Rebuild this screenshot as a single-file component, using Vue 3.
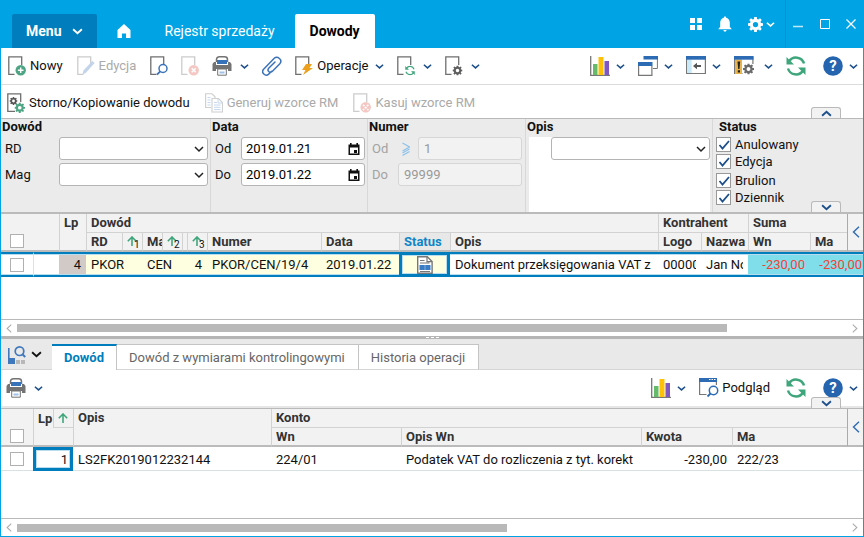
<script setup>
import { ref } from 'vue';

const mainTools = [
  { icon: "new", label: "Nowy" },
  { icon: "edit", label: "Edycja", disabled: true },
  { icon: "find", title: "Szukaj" },
  { icon: "delete", title: "Usuń", disabled: true },
  { icon: "print", title: "Drukuj", wide: true, menu: true },
  { icon: "clip", title: "Załączniki", wide: true },
  { icon: "run", label: "Operacje", menu: true },
  { icon: "sync-doc", title: "Odśwież dokument", menu: true },
  { icon: "gear-doc", title: "Ustawienia dokumentu", menu: true },
];

const viewTools = [
  { icon: "chart", title: "Wykresy", menu: true },
  { icon: "windows", title: "Okna", menu: true },
  { icon: "panel", title: "Panel", menu: true },
  { icon: "warning", title: "Ostrzeżenia", menu: true, spaced: true },
];

const documentTools = [
  { icon: "storno", label: "Storno/Kopiowanie dowodu" },
  { icon: "copy", label: "Generuj wzorce RM", disabled: true },
  { icon: "drop", label: "Kasuj wzorce RM", disabled: true },
];

const statuses = ref([
  { name: "Anulowany", checked: true },
  { name: "Edycja", checked: true },
  { name: "Brulion", checked: true },
  { name: "Dziennik", checked: true },
]);

const dateFrom = ref("2019.01.21");
const dateTo = ref("2019.01.22");

const tabs = ["Dowód", "Dowód z wymiarami kontrolingowymi", "Historia operacji"];
const activeTab = ref(0);

const topScroll = 85.5;
const bottomScroll = 59;
</script>

<template>
  <svg class="sprite" aria-hidden="true">
    <symbol id="page" viewBox="0 0 18 20">
      <path d="M6.5 18.3H.8V.8H13.7V9" fill="none" stroke="#6f6f6f" stroke-width="1.3" />
    </symbol>
    <symbol id="cog" viewBox="0 0 20 20">
      <path d="M8.3 0h3.4l.4 2.7 1.7.7L16 1.8 18.3 4l-1.7 2.3.7 1.7 2.7.4v3.3l-2.7.4-.7 1.7 1.7 2.2-2.3 2.3-2.2-1.7-1.7.7-.4 2.7H8.3l-.4-2.7-1.7-.7L4 18.3 1.7 16l1.7-2.2-.7-1.7L0 11.700V8.400L2.700 8l.7-1.700L1.700 4 4 1.800l2.200 1.600 1.700-.7zM10 6.500a3.500 3.500 0 1 0 0 7 3.500 3.500 0 0 0 0-7z" fill="currentColor" fill-rule="evenodd" />
    </symbol>
    <symbol id="chevron" viewBox="0 0 10 10">
      <path d="M1 3l4 3.600L9 3" fill="none" stroke="currentColor" stroke-width="1.700" />
    </symbol>
    <symbol id="angle" viewBox="0 0 8 12">
      <path d="M7 .8L1.500 6 7 11.200" fill="none" stroke="currentColor" stroke-width="1.400" />
    </symbol>
    <symbol id="arrow-up" viewBox="0 0 10 10">
      <path d="M5 10V1.500M.8 5.200L5 1l4.200 4.200" fill="none" stroke="currentColor" stroke-width="1.600" />
    </symbol>
    <symbol id="new" viewBox="0 0 18 20">
      <use href="#page" width="18" height="20" />
      <circle cx="12.700" cy="14.300" r="5.200" fill="#4da583" />
      <path d="M12.700 11.500v5.600M9.900 14.300h5.600" stroke="#fff" stroke-width="1.400" />
    </symbol>
    <symbol id="edit" viewBox="0 0 18 20">
      <use href="#page" width="18" height="20" />
      <path d="M5.500 18.500l1-4L15.300 5l2.300 2.100-8.700 9.600z" fill="#5285c4" />
    </symbol>
    <symbol id="find" viewBox="0 0 18 20">
      <use href="#page" width="18" height="20" />
      <circle cx="13" cy="12.500" r="4" fill="#fff" stroke="#3c73b8" stroke-width="1.500" />
      <path d="M10.200 15.300L7 18.700" stroke="#3c73b8" stroke-width="1.800" />
    </symbol>
    <symbol id="delete" viewBox="0 0 18 20">
      <use href="#page" width="18" height="20" />
      <circle cx="12.700" cy="14.300" r="5.200" fill="#e26055" />
      <path d="M10.700 12.300l4 4M14.700 12.300l-4 4" stroke="#fff" stroke-width="1.500" />
    </symbol>
    <symbol id="print" viewBox="0 0 20 20">
      <path d="M4.500 6V3.500Q4.500.8 7.500.8h5q3 0 3 2.700V6" fill="#fff" stroke="#737373" stroke-width="1.500" />
      <path d="M2 6h2v3h12V6h2l1.500 2v7H16v-2H4v2H.5V8z" fill="#737373" />
      <path d="M4 9h12v3H4z" fill="#737373" />
      <path d="M5 4h10v4H5z" fill="#3672b9" />
      <path d="M5.700 13h8.600v6.200H5.700z" fill="#fff" stroke="#737373" />
      <path d="M7.500 15.500h5v2h-5z" fill="#9fc1e8" />
    </symbol>
    <symbol id="clip" viewBox="0 0 20 20">
      <path d="M9.500 15.200l-2.800 2.900c-3.300 3-8-1.500-5.100-4.900L12 2.500c3.500-3.200 9 1.300 5.800 5.300l-7.600 7.700c-2.600 2.200-5.500-.9-3.500-3.300L13 6" fill="none" stroke="#3c73b8" stroke-width="1.500" stroke-linecap="round" />
    </symbol>
    <symbol id="run" viewBox="0 0 18 20">
      <use href="#page" width="18" height="20" />
      <path d="M11 8h6l-2.500 4H18l-10 7 2.500-5H7z" fill="#eda01e" />
    </symbol>
    <symbol id="sync" viewBox="0 0 20 20">
      <path d="M18 7.500A8.300 8.300 0 0 0 3 5.500M2 12.500a8.300 8.300 0 0 0 15 2" fill="none" stroke="currentColor" stroke-width="2.500" />
      <path d="M.5 1v7.500H8zM19.500 19v-7.500H12z" fill="currentColor" />
    </symbol>
    <symbol id="sync-doc" viewBox="0 0 18 20">
      <use href="#page" width="18" height="20" />
      <use href="#sync" x="8" y="9.500" width="10" height="10" color="#3fa67c" />
    </symbol>
    <symbol id="gear-doc" viewBox="0 0 18 20">
      <use href="#page" width="18" height="20" />
      <use href="#cog" x="7.500" y="9.500" width="10" height="10" color="#5f5f5f" />
    </symbol>
    <symbol id="chart" viewBox="0 0 20 20">
      <path d="M.7 0v19.300H20" fill="none" stroke="#777" stroke-width="1.300" />
      <path d="M3 8h4.500v11H3z" fill="#66bb6a" />
      <path d="M8.500 1h5v18h-5z" fill="#ffc107" />
      <path d="M14.500 5H19v14h-4.500z" fill="#7e57c2" />
    </symbol>
    <symbol id="windows" viewBox="0 0 20 20">
      <path d="M6 .5h13.400v12H15" fill="#fff" stroke="#777" />
      <path d="M5.500 0H20v3.500H5.500zM0 6h14.500v4H0z" fill="#2d6cb5" />
      <path d="M.6 10v9.300h13.300V10" fill="#fff" stroke="#777" stroke-width="1.200" />
    </symbol>
    <symbol id="panel" viewBox="0 0 20 20">
      <path d="M.6 1h18.800v16.500H.6z" fill="#fff" stroke="#777" stroke-width="1.200" />
      <path d="M1.200 3.500h4.500V17H1.200z" fill="#c9e8f8" />
      <path d="M0 0h20v3.700H0z" fill="#2d6cb5" />
      <path d="M7 10l4-3.300v2.300h4v2h-4v2.300z" fill="#555" />
    </symbol>
    <symbol id="warning" viewBox="0 0 20 20">
      <path d="M.6 1h18.300v16.500H.6z" fill="#fff" stroke="#777" stroke-width="1.200" />
      <path d="M1 3.500h7V18H1z" fill="#eab44d" />
      <path d="M0 0h19.500v3.700H0z" fill="#2d6cb5" />
      <path d="M3.500 5.500h2.700L5.500 13H4.200zM3.800 14.300H6v2.200H3.800z" fill="#222" />
      <path d="M8.500 8H20v11H8.500z" fill="#fff" />
      <use href="#cog" x="9" y="7.500" width="11" height="11" color="#6b6b6b" />
    </symbol>
    <symbol id="help" viewBox="0 0 20 20">
      <circle cx="10" cy="10" r="9.800" fill="#2564ae" />
      <text x="10" y="15.300" text-anchor="middle" font-family="Roboto, sans-serif" font-weight="700" font-size="15" fill="#fff">?</text>
    </symbol>
    <symbol id="storno" viewBox="0 0 18 20">
      <path d="M8 18.300H.8V.8H13.700V9" fill="none" stroke="#6f6f6f" stroke-width="1.300" />
      <use href="#cog" x="2.500" y="4" width="8" height="8" color="#555" />
      <use href="#cog" x="7.500" y="9.500" width="10.500" height="10.500" color="#4da583" />
    </symbol>
    <symbol id="copy" viewBox="0 0 18 20">
      <path d="M6 14.500H.6V.8H7l3 3V5" fill="#fff" stroke="#777" stroke-width="1.100" />
      <path d="M2.500 4.500h3M2.500 7h3M2.500 9.500h3M2.500 12h3" stroke="#5a8fd0" />
      <path d="M7 5.500h6.500l4 4V19H7z" fill="#fff" stroke="#777" stroke-width="1.100" />
      <path d="M13 5.500V10h4.500M9 9.500h3M9 12h6.500M9 14.300h6.500M9 16.600h6.500" fill="none" stroke="#5a8fd0" />
    </symbol>
    <symbol id="drop" viewBox="0 0 18 20">
      <use href="#page" width="18" height="20" />
      <circle cx="12.700" cy="14.300" r="5.200" fill="#e26055" />
      <path d="M10 11.700l5.400 5.400M15.400 11.700L10 17.100" stroke="#fff" stroke-width="1.600" stroke-dasharray="2 1" />
    </symbol>
    <symbol id="preview" viewBox="0 0 20 20">
      <path d="M7.500 16.500H.6V3h16.800v4" fill="#fff" stroke="#777" stroke-width="1.200" />
      <path d="M0 0h18v4H0z" fill="#2d6cb5" />
      <path d="M10 1.500h1.500M12.500 1.500H14M15 1.500h1.500" stroke="#fff" />
      <circle cx="14.500" cy="12.500" r="4.200" fill="#fff" stroke="#2d6cb5" stroke-width="1.500" />
      <path d="M11.500 15.500l-3 3" stroke="#2d6cb5" stroke-width="1.800" />
    </symbol>
    <symbol id="layout" viewBox="0 0 18 18">
      <path d="M0 2h1.600v10H7v6H0z" fill="#3f78bd" />
      <path d="M8 14h4v4H8zM13 14h4v4h-4z" fill="#b8b8b8" />
      <circle cx="11.500" cy="5.200" r="4.300" fill="none" stroke="#3f78bd" stroke-width="1.700" />
      <path d="M14.200 8l3 3" stroke="#3f78bd" stroke-width="2" />
    </symbol>
    <symbol id="status-doc" viewBox="0 0 16 18">
      <path d="M.7.700h9.600l4.800 4.800v11.800H.700z" fill="#fff" stroke="#777" stroke-width="1.400" />
      <path d="M10 .7v5h5M3 4.500h4.500M3 7h9.500M3 15.500h10" fill="none" stroke="#777" stroke-width="1.200" />
      <path d="M2.500 9h11v5h-11z" fill="#3a7cc4" />
      <path d="M8 9v5" stroke="#7fadde" />
    </symbol>
    <symbol id="calendar" viewBox="0 0 12 12">
      <path d="M.5 1.500H2V0h1.600v1.500h4.800V0H10v1.500h1.500V12H.5zM2 4.500v6h8v-6z" fill="#111" fill-rule="evenodd" />
      <path d="M6 7h3v3H6z" fill="#111" />
    </symbol>
    <symbol id="house" viewBox="0 0 14 14">
      <path d="M7 0l6.500 6v8H9V9.500H5V14H.5V6z" fill="#fff" />
    </symbol>
    <symbol id="tiles" viewBox="0 0 12 12">
      <path d="M0 0h5v5H0zM7 0h5v5H7zM0 7h5v5H0zM7 7h5v5H7z" fill="#fff" />
    </symbol>
    <symbol id="bell" viewBox="0 0 14 16">
      <path d="M7 .5c.8 0 1.200.5 1.200 1.200 2.600.7 3.600 2.800 3.600 5.300v3.800l2 2.400H.200l2-2.400V7c0-2.500 1-4.600 3.600-5.300C5.800 1 6.200.500 7 .500zM5.300 14h3.400q-.4 1.700-1.700 1.700T5.300 14z" fill="#fff" />
    </symbol>
  </svg>

  <div class="window">
    <header class="titlebar">
      <nav class="titlebar-nav">
        <button class="menu-button">
          Menu
          <svg class="chevron-large"><use href="#chevron" /></svg>
        </button>
        <button class="home-button" aria-label="Start">
          <svg class="icon-home"><use href="#house" /></svg>
        </button>
        <button class="page-tab">Rejestr sprzedaży</button>
        <button class="page-tab page-tab-active">Dowody</button>
      </nav>
      <div class="titlebar-tools">
        <button aria-label="Aplikacje"><svg class="icon-tiles"><use href="#tiles" /></svg></button>
        <button aria-label="Powiadomienia"><svg class="icon-bell"><use href="#bell" /></svg></button>
        <button class="settings-button" aria-label="Ustawienia">
          <svg class="icon-settings"><use href="#cog" /></svg>
          <svg class="chevron-small"><use href="#chevron" /></svg>
        </button>
      </div>
      <div class="window-buttons">
        <button aria-label="Minimalizuj">
          <svg viewBox="0 0 10 10"><path d="M0 7.500h10" stroke="#bfe8f8" stroke-width="1.500" /></svg>
        </button>
        <button aria-label="Maksymalizuj">
          <svg viewBox="0 0 10 10"><path d="M.5.500h9v9h-9z" fill="none" stroke="#fff" /></svg>
        </button>
        <button aria-label="Zamknij">
          <svg viewBox="0 0 10 10"><path d="M.5.500l9 9M9.500.500l-9 9" stroke="#fff" stroke-width="1.200" /></svg>
        </button>
      </div>
    </header>

    <div class="toolbar">
      <button
        v-for="tool in mainTools"
        :key="tool.icon"
        class="tool"
        :disabled="tool.disabled"
        :aria-label="tool.title"
      >
        <svg :class="tool.wide ? 'icon-wide' : 'icon'"><use :href="'#' + tool.icon" /></svg>
        <span v-if="tool.label">{{ tool.label }}</span>
        <svg v-if="tool.menu" class="chevron"><use href="#chevron" /></svg>
      </button>
      <div class="toolbar-right">
        <button
          v-for="tool in viewTools"
          :key="tool.icon"
          class="tool"
          :class="{ 'tool-spaced': tool.spaced }"
          :aria-label="tool.title"
        >
          <svg class="icon-wide"><use :href="'#' + tool.icon" /></svg>
          <svg class="chevron"><use href="#chevron" /></svg>
        </button>
        <button class="tool tool-sync" aria-label="Odśwież">
          <svg class="icon-wide"><use href="#sync" /></svg>
        </button>
        <button class="tool" aria-label="Pomoc">
          <svg class="icon-wide"><use href="#help" /></svg>
          <svg class="chevron"><use href="#chevron" /></svg>
        </button>
      </div>
    </div>

    <div class="toolbar toolbar-secondary">
      <button
        v-for="tool in documentTools"
        :key="tool.icon"
        class="tool"
        :disabled="tool.disabled"
      >
        <svg class="icon"><use :href="'#' + tool.icon" /></svg>
        <span>{{ tool.label }}</span>
      </button>
      <button class="fold" aria-label="Zwiń pasek">
        <svg class="chevron chevron-up"><use href="#chevron" /></svg>
      </button>
    </div>

    <form class="filters" @submit.prevent>
      <section class="filter">
        <h2>Dowód</h2>
        <div class="field">
          <label for="rd" class="label-wide">RD</label>
          <select id="rd"></select>
        </div>
        <div class="field">
          <label for="mag" class="label-wide">Mag</label>
          <select id="mag"></select>
        </div>
      </section>
      <section class="filter">
        <h2>Data</h2>
        <div class="field">
          <label for="date-from">Od</label>
          <div class="date-box">
            <input id="date-from" v-model="dateFrom" type="text" />
            <button type="button" aria-label="Wybierz datę od"><svg><use href="#calendar" /></svg></button>
          </div>
        </div>
        <div class="field">
          <label for="date-to">Do</label>
          <div class="date-box">
            <input id="date-to" v-model="dateTo" type="text" />
            <button type="button" aria-label="Wybierz datę do"><svg><use href="#calendar" /></svg></button>
          </div>
        </div>
      </section>
      <section class="filter filter-number">
        <h2>Numer</h2>
        <div class="field">
          <label for="no-from">Od</label>
          <svg class="icon-range" viewBox="0 0 8 14">
            <path d="M.5 1l7 4-7 4M.5 11l7-4M.5 13.500l7-4" fill="none" stroke="#8fc3ea" stroke-width="1.200" />
          </svg>
          <input id="no-from" type="text" value="1" disabled />
        </div>
        <div class="field">
          <label for="no-to">Do</label>
          <input id="no-to" type="text" value="99999" disabled />
        </div>
      </section>
      <section class="filter filter-note">
        <h2><label for="note">Opis</label></h2>
        <div class="note-area">
          <select id="note"></select>
        </div>
      </section>
      <section class="filter filter-status">
        <h2>Status</h2>
        <div class="status-list">
          <label v-for="status in statuses" :key="status.name">
            <input v-model="status.checked" type="checkbox" />
            {{ status.name }}
          </label>
        </div>
      </section>
      <button type="button" class="fold" aria-label="Rozwiń filtry">
        <svg class="chevron"><use href="#chevron" /></svg>
      </button>
    </form>

    <div class="grid-area grid-area-top">
      <table class="grid">
        <colgroup>
          <col class="w-check" /><col class="w-blank" /><col class="w-lp" />
          <col class="w-rd" /><col class="w-sort" /><col class="w-sort" /><col class="w-sort" />
          <col class="w-thin" /><col class="w-sort" /><col class="w-number" /><col class="w-date" />
          <col class="w-status" /><col /><col class="w-logo" /><col class="w-name" />
          <col class="w-sum" /><col class="w-sum-last" /><col class="w-side" />
        </colgroup>
        <thead>
          <tr>
            <th colspan="2" rowspan="2" class="check-head"><input type="checkbox" aria-label="Zaznacz wszystkie" /></th>
            <th rowspan="2" class="tall">Lp</th>
            <th colspan="10" class="group">Dowód</th>
            <th colspan="2" class="group">Kontrahent</th>
            <th colspan="2" class="group">Suma</th>
            <th rowspan="2" class="side">
              <button aria-label="Panel boczny"><svg><use href="#angle" /></svg></button>
            </th>
          </tr>
          <tr>
            <th>RD</th>
            <th class="sort"><span><svg><use href="#arrow-up" /></svg><i>1</i></span></th>
            <th>Ma</th>
            <th class="sort"><span><svg><use href="#arrow-up" /></svg><i>2</i></span></th>
            <th class="sort"></th>
            <th class="sort"><span><svg><use href="#arrow-up" /></svg><i>3</i></span></th>
            <th>Numer</th>
            <th>Data</th>
            <th class="current">Status</th>
            <th>Opis</th>
            <th>Logo</th>
            <th>Nazwa</th>
            <th>Wn</th>
            <th>Ma</th>
          </tr>
        </thead>
        <tbody>
          <tr class="selected">
            <td class="check"><input type="checkbox" aria-label="Zaznacz wiersz 4" /></td>
            <td class="blank"></td>
            <td class="lp">4</td>
            <td colspan="2" class="key">PKOR</td>
            <td colspan="2" class="key">CEN</td>
            <td colspan="2" class="key right">4</td>
            <td class="key">PKOR/CEN/19/4</td>
            <td class="key">2019.01.22</td>
            <td class="key focused"><svg class="icon-status" role="img" aria-label="Dokument"><use href="#status-doc" /></svg></td>
            <td><div class="clip">Dokument przeksięgowania VAT z</div></td>
            <td><div class="clip">00000</div></td>
            <td><div class="clip">Jan No</div></td>
            <td class="amount right">-230,00</td>
            <td colspan="2" class="amount amount-last right">-230,00</td>
          </tr>
        </tbody>
      </table>
    </div>
    <div class="scrollbar">
      <svg><use href="#angle" /></svg>
      <div class="track"><div class="thumb" :style="{ width: topScroll + '%' }"></div></div>
      <svg class="scroll-right"><use href="#angle" /></svg>
    </div>
    <div class="splitter"></div>

    <div class="tabs">
      <button class="layout-button" aria-label="Układ">
        <svg class="icon"><use href="#layout" /></svg>
        <svg class="chevron-large"><use href="#chevron" /></svg>
      </button>
      <button
        v-for="(tab, index) in tabs"
        :key="tab"
        class="tab"
        :class="{ 'tab-active': index === activeTab }"
        @click="activeTab = index"
      >
        {{ tab }}
      </button>
    </div>

    <div class="toolbar toolbar-bottom">
      <button class="tool" aria-label="Drukuj">
        <svg class="icon-wide"><use href="#print" /></svg>
        <svg class="chevron"><use href="#chevron" /></svg>
      </button>
      <div class="toolbar-right">
        <button class="tool" aria-label="Wykresy">
          <svg class="icon-wide"><use href="#chart" /></svg>
          <svg class="chevron"><use href="#chevron" /></svg>
        </button>
        <button class="tool tool-preview">
          <svg class="icon-wide"><use href="#preview" /></svg>
          <span>Podgląd</span>
        </button>
        <button class="tool tool-sync" aria-label="Odśwież">
          <svg class="icon-wide"><use href="#sync" /></svg>
        </button>
        <button class="tool" aria-label="Pomoc">
          <svg class="icon-wide"><use href="#help" /></svg>
          <svg class="chevron"><use href="#chevron" /></svg>
        </button>
      </div>
      <button class="fold" aria-label="Rozwiń filtry pozycji">
        <svg class="chevron"><use href="#chevron" /></svg>
      </button>
    </div>

    <div class="grid-area grid-area-bottom">
      <table class="grid">
        <colgroup>
          <col class="w-check" /><col class="w-sort" /><col class="w-sort" />
          <col class="w-text" /><col class="w-account" /><col /><col class="w-value" />
          <col class="w-credit" /><col class="w-side" />
        </colgroup>
        <thead>
          <tr>
            <th rowspan="2" class="check-head"><input type="checkbox" aria-label="Zaznacz wszystkie pozycje" /></th>
            <th class="open">Lp</th>
            <th class="sort group"><svg><use href="#arrow-up" /></svg></th>
            <th rowspan="2" class="tall">Opis</th>
            <th colspan="4" class="group">Konto</th>
            <th rowspan="2" class="side">
              <button aria-label="Panel boczny pozycji"><svg><use href="#angle" /></svg></button>
            </th>
          </tr>
          <tr>
            <th colspan="2"></th>
            <th>Wn</th>
            <th>Opis Wn</th>
            <th>Kwota</th>
            <th>Ma</th>
          </tr>
        </thead>
        <tbody>
          <tr class="plain">
            <td class="check"><input type="checkbox" aria-label="Zaznacz pozycję 1" /></td>
            <td colspan="2" class="focused right">1</td>
            <td>LS2FK2019012232144</td>
            <td>224/01</td>
            <td><div class="clip">Podatek VAT do rozliczenia z tyt. korekt</div></td>
            <td class="right">-230,00</td>
            <td colspan="2">222/23</td>
          </tr>
        </tbody>
      </table>
    </div>
    <div class="scrollbar scrollbar-last">
      <svg><use href="#angle" /></svg>
      <div class="track"><div class="thumb" :style="{ width: bottomScroll + '%' }"></div></div>
      <svg class="scroll-right"><use href="#angle" /></svg>
    </div>
  </div>
</template>

<style>
body {
  margin: 0;
}
</style>

<style scoped>
.sprite {
  position: absolute;
  width: 0;
  height: 0;
}

.window {
  display: flex;
  flex-direction: column;
  box-sizing: border-box;
  min-height: 100vh;
  border: 1px solid #00a4e4;
  border-top: 0;
  background: #fff;
  color: #111;
  font: 13px/16px Roboto, sans-serif;
}

.window *,
.window *::before {
  box-sizing: border-box;
}

button {
  display: flex;
  align-items: center;
  padding: 0;
  border: 0;
  background: none;
  color: inherit;
  font: inherit;
}

svg {
  display: block;
  flex: none;
}

/* title bar */
.titlebar {
  display: flex;
  height: 48px;
  background: #00a4e4;
  color: #fff;
}

.titlebar-nav {
  display: flex;
  flex: 1;
  align-items: stretch;
  padding: 14px 0 0 11px;
  font-size: 14px;
}

.menu-button {
  gap: 10px;
  padding: 0 14px;
  border-radius: 2px 2px 0 0;
  background: #007dbc;
  font-weight: 700;
}

.home-button {
  padding: 0 19px 0 20px;
}

.page-tab {
  padding: 0 20px 0 15px;
}

.page-tab-active {
  padding: 0 15px;
  border-radius: 2px 2px 0 0;
  background: #fff;
  color: #000;
  font-weight: 700;
}

.titlebar-tools {
  display: flex;
  align-items: center;
  gap: 16px;
  padding-right: 10px;
}

.settings-button {
  gap: 3px;
}

.window-buttons {
  display: flex;
  align-items: center;
  justify-content: space-between;
  width: 78px;
  padding: 0 7px;
  border-left: 1px solid #0093d0;
}

.window-buttons svg {
  width: 10px;
  height: 10px;
}

.icon-home {
  width: 14px;
  height: 14px;
}

.icon-tiles {
  width: 12px;
  height: 12px;
}

.icon-bell {
  width: 14px;
  height: 16px;
}

.icon-settings {
  width: 15px;
  height: 15px;
}

.chevron-large {
  width: 11px;
  height: 11px;
}

.chevron-small {
  width: 9px;
  height: 9px;
}

/* toolbars */
.toolbar {
  position: relative;
  display: flex;
  align-items: center;
  gap: 13px;
  height: 37px;
  padding: 0 5px 0 7px;
  border-bottom: 1px solid #dcdcdc;
}

.toolbar-secondary {
  gap: 14px;
  height: 34px;
  padding: 2px 6px 0;
  border-bottom-color: #b9b9b9;
}

.toolbar-bottom {
  height: 39px;
  padding: 0 5px 2px;
  border-bottom-color: #b9b9b9;
  box-shadow: inset 0 -2px #e6e6e6;
}

.toolbar-right {
  display: flex;
  gap: 13px;
  margin-left: auto;
}

.tool {
  gap: 4px;
  color: #111;
}

.tool span {
  margin-right: 1px;
}

.tool:disabled {
  color: #aaa;
}

.tool:disabled svg {
  opacity: 0.35;
}

.tool .chevron {
  margin-left: 4px;
}

.tool span + .chevron {
  margin-left: 2px;
}

.toolbar-right .chevron {
  margin-left: 2px;
}

.toolbar-right .tool-spaced .chevron {
  margin-left: 6px;
}

.tool-preview {
  gap: 3px;
  margin-right: 2px;
}

.tool-sync {
  margin-right: 4px;
  color: #3fa67c;
}

.icon {
  width: 18px;
  height: 20px;
}

.icon-wide {
  width: 20px;
  height: 20px;
}

.chevron {
  width: 9px;
  height: 9px;
  color: #1c4f8c;
}

.fold {
  position: absolute;
  right: 22px;
  bottom: 0;
  justify-content: center;
  width: 30px;
  height: 11px;
  border: 1px solid #b9b9b9;
  border-bottom: 0;
  border-radius: 3px 3px 0 0;
  background: #f2f2f2;
}

.fold .chevron {
  width: 11px;
  height: 11px;
}

.chevron-up {
  transform: rotate(180deg);
}

/* filters */
.filters {
  position: relative;
  display: grid;
  grid-template-columns: 210fr 157fr 158fr 187fr 150fr;
  height: 95px;
  border-bottom: 2px solid #bbb;
  background: #ebebeb;
}

.filter {
  display: flex;
  flex-direction: column;
  gap: 3px;
  min-width: 0;
  padding-right: 2px;
  border-right: 1px solid #d8d8d8;
}

.filter h2 {
  margin: 0;
  padding-left: 1px;
  font-size: 13px;
  font-weight: 700;
  line-height: 15px;
}

.field {
  display: flex;
  align-items: center;
  padding-left: 4px;
}

.field label {
  flex: none;
  width: 26px;
}

.field .label-wide {
  width: 54px;
}

select,
.date-box,
.field > input {
  flex: 1;
  min-width: 0;
  height: 23px;
  border: 1px solid #b4b4b4;
  border-radius: 3px;
  background: #fff;
  color: #111;
  font: inherit;
}

select {
  appearance: none;
  background: #fff url("data:image/svg+xml,%3Csvg xmlns='http://www.w3.org/2000/svg' viewBox='0 0 10 10'%3E%3Cpath d='M1 3l4 4 4-4' fill='none' stroke='%23222' stroke-width='1.500'/%3E%3C/svg%3E") no-repeat right 3px center / 10px 10px;
}

.date-box {
  display: flex;
  align-items: center;
  padding: 0 4px;
}

.date-box input {
  flex: 1;
  min-width: 0;
  padding: 0;
  border: 0;
  font: inherit;
}

.date-box svg {
  width: 12px;
  height: 12px;
}

.filter-number {
  padding-right: 3px;
  color: #a3a3a3;
}

.filter-number h2 {
  color: #111;
}

.filter-number .field > input {
  padding: 0 5px;
  border-color: #d6d6d6;
  background: #f2f2f2;
  color: #999;
}

.icon-range {
  width: 8px;
  height: 14px;
  margin: 0 8px 0 4px;
}

.note-area {
  display: flex;
  flex: 1;
  align-items: flex-start;
  margin-left: 3px;
  padding-left: 22px;
  background: #fff;
}

.filter-status {
  padding-left: 3px;
  border-right: 0;
}

.filter-status h2 {
  padding-left: 3px;
}

.status-list {
  display: flex;
  flex-direction: column;
  gap: 2px;
}

.status-list label {
  display: flex;
  align-items: center;
  gap: 4px;
  height: 15px;
}

.status-list label:nth-child(3) {
  margin-top: 2px;
}

input[type="checkbox"] {
  display: block;
  flex: none;
  appearance: none;
  width: 14px;
  height: 14px;
  margin: 0;
  border: 1px solid #b0b0b0;
  background: #fff;
}

.status-list input[type="checkbox"] {
  width: 15px;
  height: 15px;
  border-color: #999;
}

input[type="checkbox"]:checked {
  background: #fff url("data:image/svg+xml,%3Csvg xmlns='http://www.w3.org/2000/svg' viewBox='0 0 12 12'%3E%3Cpath d='M1.500 6l3 3.500L11 2' fill='none' stroke='%231c4f8c' stroke-width='1.800'/%3E%3C/svg%3E") no-repeat center / 12px 12px;
}

/* grids */
.grid-area {
  overflow: hidden;
  border-bottom: 1px solid #b9b9b9;
}

.grid-area-top {
  flex: 105 1 0;
}

.grid-area-bottom {
  flex: 109 1 0;
}

.grid {
  width: 100%;
  table-layout: fixed;
  border-spacing: 0;
}

.w-check {
  width: 32px;
}

.w-blank {
  width: 26px;
}

.w-lp {
  width: 27px;
}

.w-rd {
  width: 36px;
}

.w-sort {
  width: 20px;
}

.w-thin {
  width: 5px;
}

.w-number {
  width: 114px;
}

.w-date {
  width: 78px;
}

.w-status {
  width: 51px;
}

.w-logo {
  width: 43px;
}

.w-name {
  width: 47px;
}

.w-sum {
  width: 62px;
}

.w-sum-last {
  width: 37px;
}

.w-side {
  width: 16px;
}

.w-text {
  width: 198px;
}

.w-account {
  width: 130px;
}

.w-value {
  width: 91px;
}

.w-credit {
  width: 115px;
}

th {
  height: 19px;
  padding: 0 0 0 4px;
  overflow: hidden;
  border-left: 1px solid #d2d2d2;
  border-bottom: 2px solid #bbb;
  background: #f2f2f2;
  color: #333;
  font-weight: 700;
  line-height: 16px;
  text-align: left;
  white-space: nowrap;
}

th.group {
  border-bottom: 1px solid #d2d2d2;
}

th.open {
  border-bottom: 0;
}

th.tall {
  vertical-align: top;
  padding-top: 1px;
}

th.check-head {
  padding: 0 0 2px 9px;
  border-left: 0;
  vertical-align: bottom;
}

th.sort {
  color: #3fa67c;
}

th.sort span {
  display: flex;
  align-items: flex-start;
}

th.sort svg {
  width: 10px;
  height: 10px;
}

th.sort span svg {
  margin-top: 2px;
}

th.sort i {
  margin: 6px 0 0 -3px;
  color: #111;
  font-size: 10px;
  font-style: normal;
  font-weight: 400;
  line-height: 10px;
}

th.current {
  background: #e8e8e8;
  color: #0d86c8;
}

th.side {
  padding: 0;
  border-left-color: #aaa;
}

th.side button {
  justify-content: center;
  width: 100%;
  color: #2d6cb5;
}

th.side svg {
  width: 8px;
  height: 12px;
}

td {
  height: 24px;
  padding: 0 5px;
  white-space: nowrap;
}

.plain td {
  padding-top: 2px;
  border-bottom: 1px solid #d9e2e2;
}

.selected td {
  height: 25px;
  border-top: 2px solid #007dbc;
  border-bottom: 2px solid #007dbc;
  box-shadow: inset 0 1px #b9dcee, inset 0 -1px #b9dcee;
}

td.check,
.plain td.check {
  padding: 0 0 0 9px;
}

.selected td.blank {
  border-left: 1px solid #cfe6f5;
}

.selected td.lp {
  background: #d2cac6;
  text-align: right;
}

.selected td.key {
  background: #feffe1;
}

.selected td.amount {
  background: #80deea;
  color: #f44336;
}

.selected td.amount-last {
  padding: 0 1px 0 0;
}

.right {
  text-align: right;
}

.clip {
  overflow: hidden;
}

td.focused,
.selected td.focused,
.plain td.focused {
  border: 3px solid #007dbc;
  box-shadow: inset 0 0 0 1px #b9dcee;
}

td.focused.right {
  padding-right: 2px;
}

.icon-status {
  width: 16px;
  height: 18px;
  margin: 0 auto;
}

/* scrollbars */
.scrollbar {
  display: flex;
  align-items: center;
  gap: 5px;
  height: 16px;
  padding: 0 5px;
  color: #aaa;
}

.scrollbar-last {
  height: 17px;
}

.scrollbar svg {
  width: 6px;
  height: 9px;
}

.scroll-right {
  transform: rotate(180deg);
}

.track {
  flex: 1;
}

.thumb {
  height: 8px;
  background: #b9b9b9;
}

.splitter {
  height: 3px;
  background: linear-gradient(90deg, #fff 3px, transparent 3px 5px, #fff 5px 8px, transparent 8px 10px, #fff 10px) center / 13px 1px no-repeat #b5b5b5;
}

/* detail tabs */
.tabs {
  display: flex;
  align-items: stretch;
  height: 31px;
  padding-top: 5px;
  background: #e9e9e9;
  box-shadow: inset 0 -1px #d5d5d5;
}

.layout-button {
  gap: 5px;
  padding: 0 10px 5px 7px;
}

.tab {
  padding: 2px 13px 0 12px;
  border: 1px solid #c4c4c4;
  border-left: 0;
  border-bottom-color: #d5d5d5;
  background: #fff;
  color: #666;
}

.tab-active {
  padding: 0 12px;
  border-top: 2px solid #007dbc;
  border-bottom: 0;
  color: #007dbc;
  font-weight: 700;
}
</style>
